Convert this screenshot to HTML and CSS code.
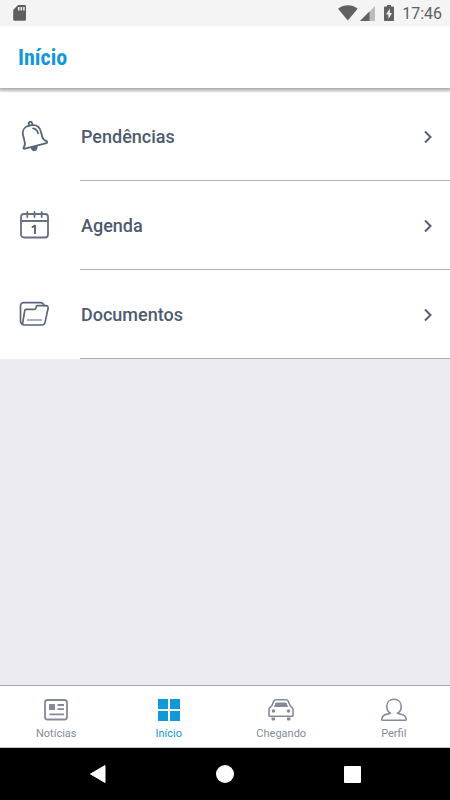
FILE: index.html
```html
<!DOCTYPE html>
<html lang="pt-BR">
<head>
<meta charset="utf-8">
<meta name="viewport" content="width=device-width, initial-scale=1">
<title>Início</title>
<link rel="stylesheet" href="styles.css">
</head>
<body>
<div class="status">
  <svg class="sd" width="14" height="16" viewBox="0 0 14 16" aria-hidden="true"><path fill="#5f5f5f" d="M5 0h7a1 1 0 0 1 1 1v13.500a1.300 1.300 0 0 1-1.300 1.300H1.500A1.300 1.300 0 0 1 .2 14.500V5z"/><path stroke="#f4f4f4" stroke-width="1.500" d="M5.700 2v3.500M8.300 2v3.500M10.900 2v3.500"/></svg>
  <div class="status-right">
    <svg width="20" height="16" viewBox="0 0 20 16" aria-hidden="true"><path fill="#616161" d="M0 3.800C6-.8 14-.8 19.600 3.800L9.800 15.600z"/></svg>
    <svg class="signal" width="15" height="15" viewBox="0 0 15 15" aria-hidden="true"><path fill="#bdbdbd" d="M15 0v15H0z"/><path fill="#616161" d="M9.500 5.500V15H0z"/></svg>
    <svg class="battery" width="10" height="16" viewBox="0 0 10 16" aria-hidden="true"><path fill="#616161" d="M3 0h4v1.600h2.200a.8.8 0 0 1 .8.8v12.800a.8.800 0 0 1-.8.800H.8a.8.800 0 0 1-.8-.8V2.400a.8.800 0 0 1 .8-.8H3z"/><path fill="#f4f4f4" d="M6 3.500 2 9.500h2.400V14L8 8H5.800z"/></svg>
    <span class="time">17:46</span>
  </div>
</div>
<header class="header"><h1>Início</h1></header>
<main class="content">
  <nav class="list" aria-label="Menu">
    <a class="row" href="#pendencias">
      <svg class="row-icon" viewBox="0 0 32 32" fill="none" stroke="#586577" stroke-width="1.800" stroke-linecap="round" stroke-linejoin="round" aria-hidden="true"><g transform="translate(.8 -.5)"><path d="M9.300 5.200 8.900 3.300a1.700 1.700 0 0 1 3.400-.6l.4 2"/><path d="M4.300 28.300c-.8-.1-.9-1.100-.2-1.700 1.300-1.700 1.300-3.700.6-6.200L3.200 14.500C2.300 9.900 4.800 6.200 9.300 5.200l3.500-.5c4.200-.3 7.200 2.200 8.300 6.500l1.300 5c.7 2.600 2 3.600 4.300 4.500 1 .4 1 1.600 0 1.900z"/><path d="M13.300 7.800c2.700.3 4.200 1.700 5 5"/><path fill="#586577" stroke="none" d="m10.800 27 7-1.700c.2 2.800-.8 4.900-2.600 5.300-2.100.5-3.800-1-4.400-3.600z"/></g></svg>
      <span class="row-label">Pendências</span>
      <svg class="chevron" viewBox="0 0 10 14" aria-hidden="true"><path d="m2 1.500 5.500 5.500L2 12.500"/></svg>
    </a>
    <a class="row" href="#agenda">
      <svg class="row-icon" viewBox="0 0 32 32" fill="none" stroke="#657082" stroke-width="1.800" stroke-linecap="round" stroke-linejoin="round" aria-hidden="true"><rect x="2" y="4" width="27" height="23.500" rx="3"/><path d="M2 11h27M8.300 2v5M15.500 2v5M22.700 2v5"/><path stroke="#4d5b6e" stroke-width="1.800" d="m13.500 17 2.500-1.400v7.700"/></svg>
      <span class="row-label">Agenda</span>
      <svg class="chevron" viewBox="0 0 10 14" aria-hidden="true"><path d="m2 1.500 5.500 5.500L2 12.500"/></svg>
    </a>
    <a class="row" href="#documentos">
      <svg class="row-icon" viewBox="0 0 32 32" fill="none" stroke="#5b687a" stroke-width="1.700" stroke-linecap="round" stroke-linejoin="round" aria-hidden="true"><path d="M4 25.500c-1.500-.4-2.500-1.500-2.500-3.200V6.700a3 3 0 0 1 3-3h17.300c1.700 0 2.700 1.200 3.200 3"/><path d="M7 10.300h8.500c1 0 1.400-.4 1.500-1.300l.2-1.300c.1-.7.400-1 1.100-1H27c1.600 0 2.400 1.100 2.100 2.500L26 23.600c-.4 1.600-1.200 2.400-2.800 2.400H5c-1 0-1.600-.7-1.400-1.700l2.200-13c.1-.7.500-1 1.200-1z"/><path stroke-width="1.200" d="M8.500 21h14"/></svg>
      <span class="row-label">Documentos</span>
      <svg class="chevron" viewBox="0 0 10 14" aria-hidden="true"><path d="m2 1.500 5.500 5.500L2 12.500"/></svg>
    </a>
  </nav>
</main>
<nav class="tabs" aria-label="Principal">
  <a class="tab" href="#noticias">
    <svg viewBox="0 0 28 24" fill="none" stroke="#838b99" stroke-width="1.800" aria-hidden="true"><rect x="3" y="2" width="22" height="19.500" rx="2.500"/><path fill="#838b99" stroke="none" d="M7 6h6v6H7z"/><path d="M15.500 7h6.500M15.500 11.200h6.500M7.500 16.300H22"/></svg>
    <span>Notícias</span>
  </a>
  <a class="tab active" href="#inicio" aria-current="page">
    <svg viewBox="0 0 28 24" fill="#1098d8" aria-hidden="true"><path d="M3 1h10v10H3zM15 1h10v10H15zM3 13h10v10H3zM15 13h10v10H15z"/></svg>
    <span>Início</span>
  </a>
  <a class="tab" href="#chegando">
    <svg viewBox="0 0 28 24" fill="none" stroke="#838b99" stroke-width="1.600" stroke-linejoin="round" aria-hidden="true"><path d="M2 17.500v-5.700c0-1 .3-1.700 1.100-2.400l1.600-1.400 2-4.600C7.200 2.200 8 1.800 9.100 1.800h9.800c1.100 0 1.900.4 2.400 1.600l2 4.600 1.600 1.400c.8.700 1.100 1.400 1.100 2.400v5.700c0 .4-.3.700-.7.700H2.700c-.4 0-.7-.3-.7-.7z"/><path fill="#838b99" stroke="none" d="M9.500 4.500h9c.6 0 1 .2 1.200.8L21 9H7l1.300-3.700c.2-.6.600-.8 1.200-.8zM4.500 19.500H8v2a1 1 0 0 1-1 1H5.500a1 1 0 0 1-1-1zM20 19.500h3.500v2a1 1 0 0 1-1 1H21a1 1 0 0 1-1-1z"/><circle cx="6.500" cy="13" r="1.800" fill="#838b99" stroke="none"/><circle cx="21.500" cy="13" r="1.800" fill="#838b99" stroke="none"/></svg>
    <span>Chegando</span>
  </a>
  <a class="tab" href="#perfil">
    <svg viewBox="0 0 28 24" fill="none" stroke="#838b99" stroke-width="1.600" stroke-linejoin="round" aria-hidden="true"><path d="M10.500 15.300C7.800 13.800 6.800 11 6.800 8.500c0-4.300 3-7.200 7.200-7.200s7.200 2.900 7.200 7.200c0 2.500-1 5.300-3.700 6.800l4.200 1.100c2.800.7 4.300 2.300 4.500 5 0 .6-.3.900-.9.900H2.700c-.6 0-.9-.3-.9-.9.200-2.700 1.700-4.300 4.500-5z"/></svg>
    <span>Perfil</span>
  </a>
</nav>
<div class="system">
  <button type="button" aria-label="Voltar"><svg width="18" height="20" viewBox="0 0 18 20"><path fill="#fff" stroke="#fff" stroke-width="1" stroke-linejoin="round" d="M16 1.500v17L1.500 10z"/></svg></button>
  <button type="button" aria-label="Tela inicial"><svg width="18" height="18" viewBox="0 0 18 18"><circle cx="9" cy="9" r="9" fill="#fff"/></svg></button>
  <button type="button" aria-label="Recentes"><svg width="17" height="17" viewBox="0 0 17 17"><rect width="17" height="17" rx="1" fill="#fff"/></svg></button>
</div>
</body>
</html>
```
FILE: styles.css
```css
* { box-sizing: border-box; }

body {
  margin: 0;
  min-height: 100vh;
  display: flex;
  flex-direction: column;
  background: #ebebf1;
  color: #4d5b6e;
  font-family: Roboto, "Liberation Sans", sans-serif;
}

a { color: inherit; text-decoration: none; }
svg { display: block; flex: none; }

.status {
  position: relative;
  z-index: 1;
  display: flex;
  align-items: center;
  justify-content: space-between;
  height: 26px;
  padding: 0 8px 0 13px;
  background: #f4f4f4;
}

.status-right { display: flex; align-items: center; }
.signal { margin-left: 2px; }
.battery { margin-left: 9px; }

.time {
  margin-left: 8px;
  padding-top: 2px;
  color: #616161;
  font-size: 16px;
  line-height: 24px;
}

.header {
  position: relative;
  display: flex;
  align-items: center;
  height: 62px;
  padding: 2px 18px 0;
  background: #fff;
  box-shadow: 0 1px 3px 1px rgba(0, 0, 0, 0.3);
}

.header h1 {
  margin: 0;
  color: #1098d8;
  font-family: "Roboto Condensed", "Liberation Sans Narrow", Roboto, sans-serif;
  font-size: 22px;
  font-weight: 700;
  line-height: 28px;
}

.content { flex: 1; padding-top: 4px; }
.list { background: #fff; }

.row {
  display: grid;
  grid-template-columns: 61px 1fr 12px;
  align-items: center;
  height: 89px;
  padding: 0 15px 0 19px;
  background: linear-gradient(#acb0b8, #acb0b8) 80px 100% / 100% 1px no-repeat;
}

.row-icon { width: 32px; height: 32px; }

.row-label {
  padding-left: 1px;
  font-size: 18px;
  font-weight: 500;
  line-height: 24px;
}

.chevron {
  width: 10px;
  height: 14px;
  fill: none;
  stroke: #536072;
  stroke-width: 2;
}

.tabs {
  display: grid;
  grid-template-columns: repeat(4, 1fr);
  height: 63px;
  border-top: 1px solid #a4a7b4;
  border-bottom: 1px solid #c4c4c8;
  background: #fff;
}

.tab {
  display: flex;
  flex-direction: column;
  align-items: center;
  gap: 5px;
  padding-top: 12px;
  color: #838b99;
  font-size: 11px;
  line-height: 14px;
}

.tab svg { width: 28px; height: 24px; }
.tab.active { color: #1098d8; }

.system {
  display: flex;
  align-items: center;
  justify-content: space-between;
  height: 52px;
  padding: 0 76px;
  background: #000;
}

.system button {
  display: grid;
  place-items: center;
  width: 44px;
  height: 44px;
  padding: 0;
  border: 0;
  background: none;
}
```
